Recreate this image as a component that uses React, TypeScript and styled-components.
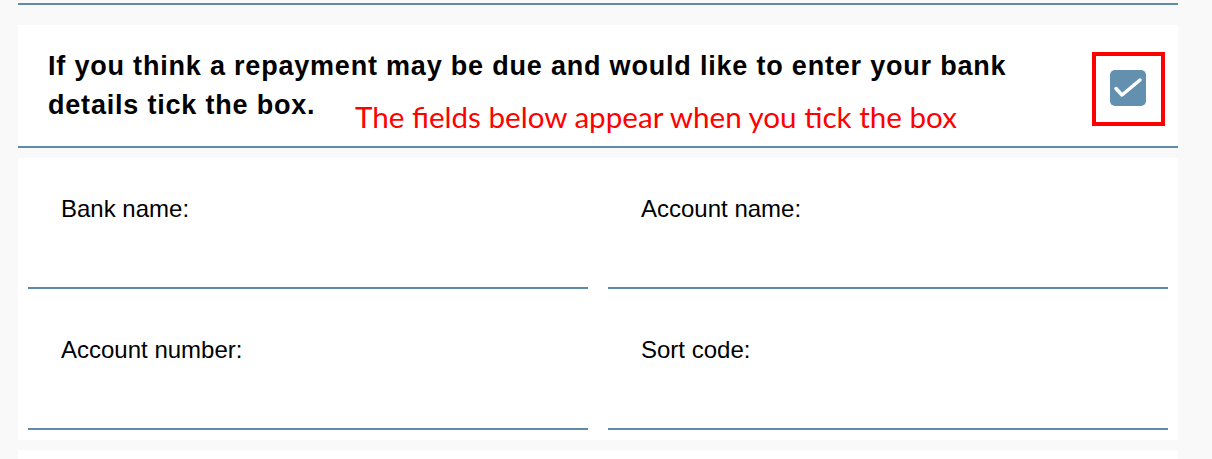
import styled, { createGlobalStyle } from 'styled-components';

const GlobalStyle = createGlobalStyle`
  html,
  body {
    margin: 0;
    padding: 0;
    background: #f9f9f9;
    overflow: hidden;
  }

  body {
    font-family: "Liberation Sans", Arial, sans-serif;
    color: #000;
  }
`;

const Page = styled.main`
  display: flex;
  flex-direction: column;
  padding: 0 34px 0 18px;
`;

const PrevSection = styled.div`
  height: 3px;
  border-bottom: 2px solid #5f8bab;
  margin-bottom: 20px;
`;

const QuestionPanel = styled.section`
  position: relative;
  display: flex;
  gap: 32px;
  padding: 22px 13px 20px 30px;
  margin-bottom: 10px;
  background: #fff;
  border-bottom: 2px solid #5f8bab;
`;

const Question = styled.h2`
  flex: 1;
  margin: 0;
  font-size: 27px;
  font-weight: 700;
  line-height: 39px;
  letter-spacing: 0.8px;
`;

// red note added on top of the form
const Note = styled.span`
  position: absolute;
  left: 337px;
  top: 76px;
  font-family: "Lato", "Noto Sans", sans-serif;
  font-size: 29.6px;
  line-height: 32px;
  color: #f00;
  white-space: nowrap;
`;

const CheckFrame = styled.div`
  flex: none;
  box-sizing: border-box;
  width: 73px;
  height: 74px;
  margin-top: 5px;
  display: flex;
  align-items: center;
  justify-content: center;
  border: 4px solid #f00;
`;

const Checkbox = styled.span`
  display: flex;
  width: 36px;
  height: 36px;
  margin: 0 2px 2px 0;
  border-radius: 5px;
  background: #6290ae;
`;

const FieldsPanel = styled.section`
  display: grid;
  grid-template-columns: 1fr 1fr;
  column-gap: 20px;
  row-gap: 10px;
  padding: 0 10px 10px;
  margin-bottom: 10px;
  background: #fff;
`;

const Field = styled.label`
  display: flex;
  flex-direction: column;
  padding-top: 39px;
  border-bottom: 2px solid #5f8bab;
`;

const FieldLabel = styled.span`
  padding-left: 33px;
  font-size: 24px;
  line-height: 24px;
`;

const Input = styled.input`
  height: 66px;
  padding: 0 33px;
  border: 0;
  outline: none;
  background: transparent;
  font: inherit;
  font-size: 24px;
`;

const NextPanel = styled.div`
  height: 40px;
  background: #fff;
`;

const fields = ['Bank name:', 'Account name:', 'Account number:', 'Sort code:'];

export default function App() {
  return (
    <>
      <GlobalStyle />
      <Page>
        <PrevSection />
        <QuestionPanel>
          <Question>
            If you think a repayment may be due and would like to enter your bank details tick the box.
          </Question>
          <Note>The fields below appear when you tick the box</Note>
          <CheckFrame>
            <Checkbox role="checkbox" aria-checked="true">
              <svg width="36" height="36" viewBox="0 0 36 36">
                <polyline
                  points="6,18.5 12,25 30,10"
                  fill="none"
                  stroke="#fff"
                  strokeWidth="3.5"
                  strokeLinecap="round"
                  strokeLinejoin="round"
                />
              </svg>
            </Checkbox>
          </CheckFrame>
        </QuestionPanel>
        <FieldsPanel>
          {fields.map((name) => (
            <Field key={name}>
              <FieldLabel>{name}</FieldLabel>
              <Input type="text" />
            </Field>
          ))}
        </FieldsPanel>
        <NextPanel />
      </Page>
    </>
  );
}
